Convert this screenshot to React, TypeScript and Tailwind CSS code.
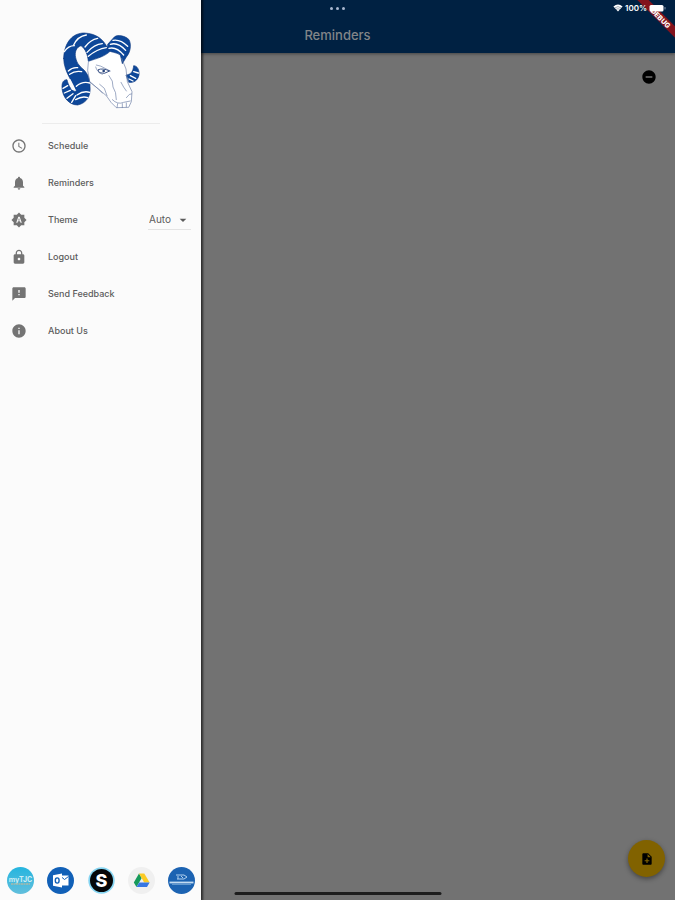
import { useState } from "react";
import type { ReactNode } from "react";
import {
  MdAccessTime,
  MdArrowDropDown,
  MdBrightnessAuto,
  MdFeedback,
  MdInfo,
  MdLock,
  MdNoteAdd,
  MdNotifications,
  MdRemoveCircle,
} from "react-icons/md";

function RamLogo() {
  return (
    <svg viewBox="34 34 240 240" className="h-20 w-20" role="img" aria-label="Ram mascot" strokeLinejoin="round" strokeLinecap="round">
      <path d="M112 124 C130 118 160 108 182 94 L216 116 L228 146 L233 190 L246 216 L243 244 L237 262 L202 266 L184 248 L170 228 L122 188 L116 160 Z" fill="#fff" />
      <g fill="#0d4799" stroke="#0c3880" strokeWidth="2">
        <path d="M42 116 C44 66 70 40 104 40 C140 42 158 58 170 78 L184 92 C168 110 142 116 116 125 C114 106 108 88 94 78 C80 82 74 98 78 114 C82 134 92 140 104 152 C116 166 121 180 121 200 C124 228 112 250 84 256 C58 256 38 232 37 204 C36 188 42 180 52 180 C56 196 62 210 78 216 C76 192 42 160 42 116 Z" />
        <path d="M174 74 L194 52 C204 44 226 48 238 60 C246 76 242 98 230 112 L218 132 L212 106 C198 96 186 100 176 92 Z" />
        <path d="M230 166 C246 164 250 154 252 138 C262 138 270 150 268 166 C264 182 254 190 238 188 Z" />
      </g>
      <path d="M54 178 L62 178 L80 214 L66 210 Z" fill="#fbfbfb" />
      <g fill="none" stroke="#fff" strokeWidth="4">
        <path d="M44 96 Q56 78 74 78" />
        <path d="M72 76 Q84 50 110 46" />
        <path d="M106 82 Q122 60 144 56" />
        <path d="M112 98 Q134 74 158 72" />
        <path d="M116 110 Q142 88 170 84" />
        <path d="M56 154 Q68 142 84 144" />
        <path d="M60 164 Q76 152 96 156" />
        <path d="M80 200 Q98 184 120 190" />
        <path d="M82 226 Q102 212 120 218" />
        <path d="M78 240 Q98 228 114 234" />
        <path d="M40 206 L54 198 M44 220 L62 212 M52 236 L70 222 M66 248 L78 228" />
        <path d="M182 74 Q204 66 228 92" />
        <path d="M190 62 Q212 58 234 80" />
        <path d="M178 86 Q200 80 222 106" />
        <path d="M242 168 L258 176 M252 156 L266 160 M238 178 L250 184" />
      </g>
      <g fill="none" stroke="#6d7fa6" strokeWidth="2">
        <path d="M116 128 L114 152 L120 186 L170 228 L184 248 L200 264 L237 263 L245 246 L247 216 L233 186 L229 148 L216 116" />
        <path d="M122 188 L146 208 L158 220 M150 194 L164 206 L172 228" />
        <path d="M178 168 Q192 184 190 202 Q200 216 200 240 M214 188 Q222 204 230 214" />
        <path d="M188 240 Q204 256 222 248 L242 244 M230 234 Q240 220 246 222" />
        <path d="M202 264 L204 252 M218 264 L218 252 M230 262 L230 250" />
        <path d="M140 136 Q154 138 166 146 L182 154 M138 142 Q142 158 158 164" />
      </g>
      <path d="M146 150 Q158 144 180 154 L164 161 L150 159 Z" fill="none" stroke="#3d5588" strokeWidth="3" />
      <circle cx="162" cy="154" r="4" fill="#24427c" />
    </svg>
  );
}

function MenuItem({ icon, label }: { icon: ReactNode; label: string }) {
  return (
    <li>
      <button type="button" className="flex h-[37px] w-full items-center gap-[21px] pl-[11px] text-left">
        <span className="text-base text-[#747474]">{icon}</span>
        {label}
      </button>
    </li>
  );
}

function ThemeItem() {
  const [theme, setTheme] = useState("Auto");
  return (
    <li className="flex h-[37px] items-center gap-[21px] pl-[11px] pr-[10px]">
      <MdBrightnessAuto className="text-base text-[#747474]" />
      <label htmlFor="theme" className="flex-1">Theme</label>
      <div className="relative h-5 w-[43px] border-b border-[#e4e4e4]">
        <select
          id="theme"
          value={theme}
          onChange={(e) => setTheme(e.target.value)}
          className="h-full w-full appearance-none bg-transparent pl-px text-[10px] font-normal outline-none"
        >
          <option>Auto</option>
          <option>Light</option>
          <option>Dark</option>
        </select>
        <MdArrowDropDown className="pointer-events-none absolute right-0 top-0.5 text-base" />
      </div>
    </li>
  );
}

function QuickLink({ label, children }: { label: string; children: ReactNode }) {
  return (
    <a href="#" aria-label={label} className="block h-[27px] w-[27px]">
      {children}
    </a>
  );
}

function Drawer() {
  return (
    <aside className="absolute inset-y-0 left-0 z-20 flex w-[201px] flex-col bg-[#fbfbfb] shadow-[1px_0_2px_1px_rgba(0,0,0,0.6)]">
      <div className="mx-auto flex h-[124px] w-[118px] justify-center border-b border-[#ececec] pt-[31px]">
        <RamLogo />
      </div>
      <nav className="flex-1 pt-[3px]" aria-label="Main">
        <ul className="text-[9px] font-medium text-[#5c5c5c]">
          <MenuItem icon={<MdAccessTime />} label="Schedule" />
          <MenuItem icon={<MdNotifications />} label="Reminders" />
          <ThemeItem />
          <MenuItem icon={<MdLock />} label="Logout" />
          <MenuItem icon={<MdFeedback />} label="Send Feedback" />
          <MenuItem icon={<MdInfo />} label="About Us" />
        </ul>
      </nav>
      <footer className="flex justify-between pb-[6px] pl-[7px] pr-[6px]">
        <QuickLink label="myTJC">
          <svg viewBox="0 0 27 27">
            <defs>
              <linearGradient id="sky" x1="0" y1="0" x2="0" y2="1">
                <stop offset="0" stopColor="#25b5df" />
                <stop offset="1" stopColor="#62bfdc" />
              </linearGradient>
            </defs>
            <circle cx="13.5" cy="13.5" r="13.5" fill="url(#sky)" />
            <text x="13.5" y="15" textAnchor="middle" fontSize="7" fontWeight="700" fill="#cdeef6">myTJC</text>
            <path d="M4 17H23" stroke="#a9b9a8" strokeWidth="1.4" strokeDasharray="2 .5" />
          </svg>
        </QuickLink>
        <QuickLink label="Outlook">
          <svg viewBox="0 0 27 27">
            <circle cx="13.5" cy="13.5" r="13.5" fill="#1160b7" />
            <path d="M13 8.5h8.5v10H13z" fill="#fff" />
            <path d="M14.5 10l3 2.5 4-3" fill="none" stroke="#1160b7" />
            <path d="M6 8.2L15 6.5v14L6 18.8z" fill="#fff" />
            <ellipse cx="10.2" cy="13.5" rx="1.9" ry="2.6" fill="none" stroke="#1160b7" strokeWidth="1.4" />
          </svg>
        </QuickLink>
        <QuickLink label="Schoology">
          <svg viewBox="0 0 27 27">
            <circle cx="13.5" cy="13.5" r="13.2" fill="#86d5f2" />
            <circle cx="13.5" cy="13.5" r="11.5" fill="#050709" />
            <text x="13.5" y="20" textAnchor="middle" fontSize="18" fontWeight="800" fill="#fff">S</text>
          </svg>
        </QuickLink>
        <QuickLink label="Google Drive">
          <svg viewBox="0 0 27 27">
            <circle cx="13.5" cy="13.5" r="13.5" fill="#f0f0f0" />
            <path d="M11 6.5l2.7 4.6-5.2 9-2.7-4.7z" fill="#16995a" />
            <path d="M11 6.5h5.3l5.3 9h-5.4z" fill="#fbcb24" />
            <path d="M11.2 15.4h10.4L19 20.1H8.5z" fill="#3777e3" />
          </svg>
        </QuickLink>
        <QuickLink label="District site">
          <svg viewBox="0 0 27 27">
            <circle cx="13.5" cy="13.5" r="13.5" fill="#1c63b2" />
            <path d="M8 8h8l3 2-3 2H9M10 9v3M13 9l2 2" fill="none" stroke="#afd0ee" strokeWidth="1" />
            <path d="M1.5 15.5h24" stroke="#c3dbf1" strokeWidth="1.8" />
            <path d="M4 17.3h19" stroke="#75a5d5" strokeWidth="1" />
          </svg>
        </QuickLink>
      </footer>
    </aside>
  );
}

export default function App() {
  return (
    <div className="relative flex min-h-screen flex-col overflow-hidden bg-[#727272] font-['Inter',sans-serif]">
      <header className="h-[53px] bg-[#002142] shadow-[0_1px_3px_rgba(0,0,0,0.4)]">
        <div className="relative z-10 grid h-4 grid-cols-3 items-center">
          <span />
          <div className="flex justify-center gap-[3px]">
            <i className="h-[3px] w-[3px] rounded-full bg-[#a9b8d0]" />
            <i className="h-[3px] w-[3px] rounded-full bg-[#a9b8d0]" />
            <i className="h-[3px] w-[3px] rounded-full bg-[#a9b8d0]" />
          </div>
          <div className="flex items-center justify-end gap-0.5 pr-[9px] text-[8px] font-semibold text-white">
            <svg viewBox="0 0 10 8" className="h-2 w-[10px]" aria-hidden="true">
              <path d="M0.4 2.6Q5-1.4 9.6 2.6L5 7.6Z" fill="#fff" />
              <path d="M1.6 4Q5 1.2 8.4 4M3 5.4Q5 4 7 5.4" fill="none" stroke="#002142" strokeWidth="0.4" />
            </svg>
            100%
            <svg viewBox="0 0 17 8" className="h-2 w-[17px]" aria-hidden="true">
              <rect x="0.5" y="1" width="14" height="6.5" rx="1.5" fill="#fff" />
              <rect x="15.5" y="3" width="1" height="2.5" rx="0.5" fill="#8a9aaf" />
            </svg>
          </div>
        </div>
        <h1 className="pt-[9px] text-center text-[13px] font-medium leading-5 text-[#828588]">Reminders</h1>
      </header>

      <main className="flex flex-1 flex-col justify-between">
        <div className="flex justify-end pr-[18px] pt-4">
          <button type="button" aria-label="Remove reminder" className="text-base text-black">
            <MdRemoveCircle />
          </button>
        </div>
        <div className="flex justify-end pb-[23px] pr-[10px]">
          <button
            type="button"
            aria-label="Add reminder"
            className="flex h-[37px] w-[37px] items-center justify-center rounded-full bg-[#816200] text-sm text-black shadow-[0_2px_5px_rgba(0,0,0,0.4)]"
          >
            <MdNoteAdd />
          </button>
        </div>
      </main>

      <div className="absolute bottom-[5px] left-1/2 h-[3px] w-[207px] -translate-x-1/2 rounded-full bg-[#1d1d1d]" />

      <div className="absolute right-0 top-0 h-10 w-10 overflow-hidden" aria-hidden="true">
        <div className="absolute -right-[22px] top-[14px] flex h-2 w-[72px] rotate-45 items-center justify-center bg-[#82131d] text-[7px] font-extrabold leading-none text-white">
          DEBUG
        </div>
      </div>

      <Drawer />
    </div>
  );
}
